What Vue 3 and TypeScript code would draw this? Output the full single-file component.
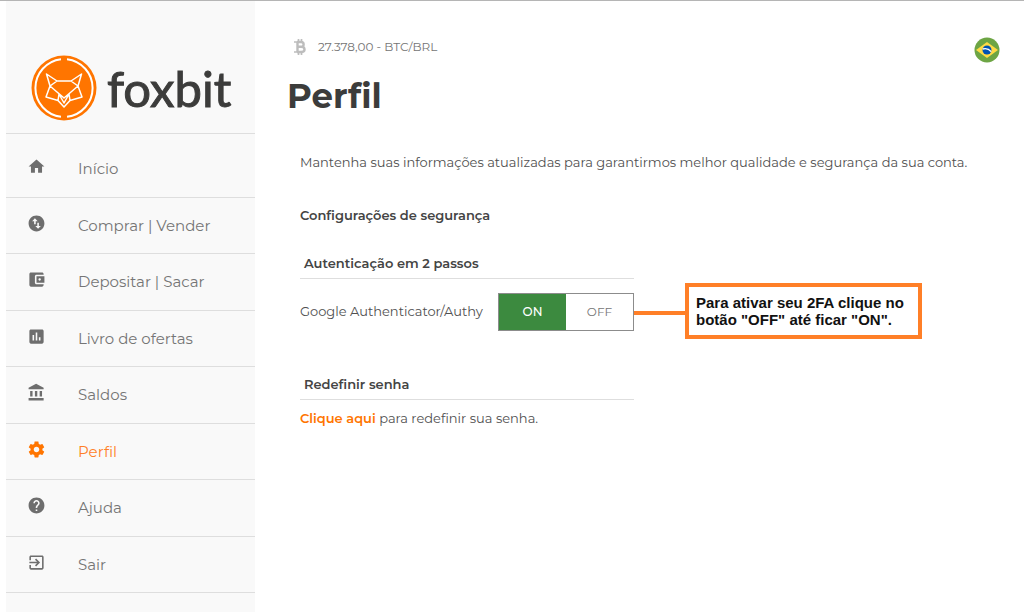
<script setup lang="ts">
import { ref } from 'vue'

interface MenuItem {
  label: string
  icon: string
  active?: boolean
}

const menu: MenuItem[] = [
  { label: 'Início', icon: 'M10 20v-6h4v6h5v-8h3L12 3 2 12h3v8z' },
  {
    label: 'Comprar | Vender',
    icon: 'M12 2C6.48 2 2 6.48 2 12s4.48 10 10 10 10-4.48 10-10S17.52 2 12 2zM6.5 9L10 5.5 13.5 9H11v4H9V9H6.5zm11 6L14 18.5 10.5 15H13v-4h2v4h2.5z',
  },
  {
    label: 'Depositar | Sacar',
    icon: 'M21 18v1c0 1.1-.9 2-2 2H5c-1.11 0-2-.9-2-2V5c0-1.1.89-2 2-2h14c1.1 0 2 .9 2 2v1h-9c-1.11 0-2 .9-2 2v8c0 1.1.89 2 2 2h9zm-9-2h10V8H12v8zm4-2.5c-.83 0-1.5-.67-1.5-1.5s.67-1.5 1.5-1.5 1.5.67 1.5 1.5-.67 1.5-1.5 1.5z',
  },
  {
    label: 'Livro de ofertas',
    icon: 'M19 3H5c-1.1 0-2 .9-2 2v14c0 1.1.9 2 2 2h14c1.1 0 2-.9 2-2V5c0-1.1-.9-2-2-2zM9 17H7v-7h2v7zm4 0h-2V7h2v10zm4 0h-2v-4h2v4z',
  },
  {
    label: 'Saldos',
    icon: 'M4 10v7h3v-7H4zm6 0v7h3v-7h-3zM2 22h19v-3H2v3zm14-12v7h3v-7h-3zm-4.5-9L2 6v2h19V6l-9.500-5z',
  },
  {
    label: 'Perfil',
    active: true,
    icon: 'M19.43 12.98c.04-.32.07-.64.07-.98s-.03-.66-.07-.98l2.110-1.650c.19-.15.24-.42.12-.64l-2-3.460c-.12-.22-.39-.3-.61-.22l-2.490 1c-.52-.4-1.080-.73-1.690-.98l-.38-2.650C14.460 2.180 14.250 2 14 2h-4c-.25 0-.46.18-.49.42l-.38 2.650c-.61.25-1.170.59-1.690.98l-2.490-1c-.23-.09-.49 0-.61.22l-2 3.460c-.13.22-.07.49.12.64l2.110 1.650c-.04.32-.07.65-.07.98s.03.66.07.98l-2.110 1.650c-.19.15-.24.42-.12.64l2 3.460c.12.22.39.3.61.22l2.490-1c.52.4 1.080.73 1.690.98l.38 2.650c.03.24.24.42.49.42h4c.25 0 .46-.18.49-.42l.38-2.650c.61-.25 1.170-.59 1.690-.98l2.490 1c.23.09.49 0 .61-.22l2-3.460c.12-.22.07-.49-.12-.64l-2.110-1.650zM12 15.500c-1.930 0-3.500-1.570-3.500-3.500s1.570-3.500 3.500-3.500 3.500 1.570 3.500 3.500-1.570 3.500-3.500 3.500z',
  },
  {
    label: 'Ajuda',
    icon: 'M12 2C6.48 2 2 6.48 2 12s4.48 10 10 10 10-4.480 10-10S17.520 2 12 2zm1 17h-2v-2h2v2zm2.070-7.750l-.9.920C13.450 12.900 13 13.500 13 15h-2v-.5c0-1.100.45-2.100 1.170-2.830l1.240-1.260c.37-.36.59-.86.59-1.410 0-1.100-.9-2-2-2s-2 .9-2 2H8c0-2.210 1.790-4 4-4s4 1.790 4 4c0 .88-.36 1.680-.93 2.250z',
  },
  {
    label: 'Sair',
    icon: 'M10.090 15.590L11.500 17l5-5-5-5-1.410 1.410L12.670 11H3v2h9.670l-2.580 2.590zM19 3H5c-1.110 0-2 .9-2 2v4h2V5h14v14H5v-4H3v4c0 1.100.89 2 2 2h14c1.100 0 2-.9 2-2V5c0-1.100-.9-2-2-2z',
  },
]

const twoFactor = ref(true)
</script>

<template>
  <div class="page">
    <aside class="sidebar">
      <a class="brand" href="#" aria-label="foxbit">
        <svg class="brand-mark" viewBox="0 0 66 66" aria-hidden="true">
          <circle cx="33" cy="33" r="32.500" fill="#ff7500" />
          <g fill="none" stroke="#fff" stroke-linejoin="round">
            <path d="M30 4.200A29 29 0 0 0 30 61.800M36 4.200A29 29 0 0 1 36 61.800" stroke-width="2" />
            <path
              d="M15.500 19L26 26H40L50.500 19L47 31L51 42L39 45.500L33 52L27 45.500L15 42L19 31ZM15.500 19L19 31L26 26M50.500 19L47 31L40 26M19 31L33 43L47 31M28 39L27 45.500M38 39L39 45.500M28 39L33 48L38 39"
              stroke-width="1.500"
            />
          </g>
        </svg>
        <span class="brand-name">foxbit</span>
      </a>
      <nav class="menu">
        <a
          v-for="item in menu"
          :key="item.label"
          href="#"
          class="menu-item"
          :class="{ active: item.active }"
          :aria-current="item.active ? 'page' : undefined"
        >
          <svg class="menu-icon" viewBox="0 0 24 24" aria-hidden="true"><path :d="item.icon" /></svg>
          <span>{{ item.label }}</span>
        </a>
      </nav>
    </aside>

    <main class="content">
      <header class="topbar">
        <div class="ticker">
          <svg class="btc" viewBox="0 0 12 16" aria-hidden="true">
            <g fill="none" stroke="#bdbdbd">
              <path d="M0 3H7M0 13H7M4.500 0V3M7.500 0V3M4.500 13V16M7.500 13V16" stroke-width="1.700" />
              <path d="M3.500 3V13M3 3H7C10.500 3 10.500 7.800 7 7.800H3.500M7 7.800C11.700 7.800 11.700 13 7 13H3" stroke-width="2.400" />
            </g>
          </svg>
          <span>27.378,00 - BTC/BRL</span>
        </div>
        <button class="language" type="button" aria-label="Português (Brasil)">
          <svg viewBox="0 0 26 26" aria-hidden="true">
            <circle cx="13" cy="13" r="12.500" fill="#6da544" />
            <path d="M13 5L24 13L13 21L2 13Z" fill="#ffda44" />
            <circle cx="13" cy="13" r="4.500" fill="#0052b4" />
            <path d="M8.700 12C11.500 11.200 15 12 17.200 14.600" fill="none" stroke="#fff" stroke-width="1.400" />
          </svg>
        </button>
      </header>

      <h1>Perfil</h1>

      <div class="body">
        <p class="intro">Mantenha suas informações atualizadas para garantirmos melhor qualidade e segurança da sua conta.</p>
        <h2>Configurações de segurança</h2>

        <section class="panel">
          <h3>Autenticação em 2 passos</h3>
          <div class="setting">
            <span id="auth-label">Google Authenticator/Authy</span>
            <div class="switch" role="group" aria-labelledby="auth-label">
              <button type="button" :class="{ on: twoFactor }" :aria-pressed="twoFactor" @click="twoFactor = true">ON</button>
              <button type="button" :class="{ on: !twoFactor }" :aria-pressed="!twoFactor" @click="twoFactor = false">OFF</button>
            </div>
            <div class="callout">
              <span class="callout-line"></span>
              <p class="callout-box">Para ativar seu 2FA clique no<br />botão "OFF" até ficar "ON".</p>
            </div>
          </div>
        </section>

        <section class="panel reset">
          <h3>Redefinir senha</h3>
          <p><a href="#">Clique aqui</a> para redefinir sua senha.</p>
        </section>
      </div>
    </main>
  </div>
</template>

<style>
body {
  margin: 0;
  background: #fff;
}
</style>

<style scoped>
.page {
  box-sizing: border-box;
  display: flex;
  min-height: 100vh;
  padding-left: 6px;
  border-top: 1px solid #b5b5b5;
  font-family: Montserrat, Inter, "Liberation Sans", sans-serif;
  font-size: 13px;
  line-height: 20px;
  color: #505050;
}

.page *,
.page *::before {
  box-sizing: border-box;
}

h1,
h2,
h3,
p {
  margin: 0;
}

a {
  text-decoration: none;
}

.sidebar {
  flex: 0 0 249px;
  background: #f9f9f9;
}

.brand {
  display: flex;
  align-items: center;
  gap: 10px;
  padding: 54px 0 12px 25px;
  border-bottom: 1px solid #dedede;
}

.brand-mark {
  width: 66px;
  height: 66px;
}

.brand-name {
  font-family: Lato, sans-serif;
  font-size: 49px;
  line-height: 66px;
  color: #3c3c3b;
  -webkit-text-stroke: 1px #3c3c3b;
}

.menu {
  display: flex;
  flex-direction: column;
  padding-top: 7px;
}

.menu-item {
  display: flex;
  gap: 32px;
  height: 57px;
  padding: 16px 0 0 21px;
  border-bottom: 1px solid #dedede;
  font-size: 15px;
  line-height: 24px;
  color: #757575;
}

.menu-item:nth-child(even) {
  height: 56px;
}

.menu-icon {
  width: 19px;
  height: 19px;
  fill: #6e6e6e;
}

.menu-item.active {
  color: #ff7f27;
}

.menu-item.active .menu-icon {
  fill: #ff7500;
}

.content {
  flex: 1;
  min-width: 0;
  padding: 36px 24px 0 32px;
}

.topbar {
  display: flex;
  justify-content: space-between;
}

.ticker {
  display: flex;
  align-items: center;
  gap: 12px;
  height: 20px;
  padding-left: 7px;
  font-size: 12px;
  color: #757575;
}

.btc {
  width: 12px;
  height: 16px;
}

.language {
  width: 26px;
  height: 26px;
  padding: 0;
  border: 0;
  background: none;
}

.language svg {
  display: block;
}

h1 {
  padding-top: 13px;
  font-size: 34px;
  line-height: 40px;
  font-weight: 700;
  color: #3c3c3b;
}

.body {
  padding: 36px 0 0 13px;
}

h2,
h3 {
  font-size: 13px;
  line-height: 20px;
  font-weight: 600;
  color: #444;
}

h2 {
  padding-top: 33px;
}

.panel {
  width: 334px;
  padding-top: 28px;
}

.panel h3 {
  padding: 0 4px 5px;
  border-bottom: 1px solid #dedede;
}

.setting {
  position: relative;
  display: flex;
  justify-content: space-between;
  padding-top: 14px;
  line-height: 36px;
  white-space: nowrap;
}

.switch {
  display: flex;
  width: 136px;
  height: 38px;
  border: 1px solid #8c8c8c;
}

.switch button {
  flex: 1;
  padding: 0;
  border: 0;
  background: #fff;
  font: inherit;
  font-size: 12px;
  line-height: 34px;
  color: #757575;
}

.switch button.on {
  background: #3c8a3f;
  font-weight: 500;
  color: #fff;
}

.callout {
  position: absolute;
  top: 4px;
  left: 100%;
  display: flex;
  align-items: center;
}

.callout-line {
  width: 51px;
  height: 4px;
  margin-top: 4px;
  background: #ff7f27;
}

.callout-box {
  width: 237px;
  padding: 7px;
  border: 4px solid #ff7f27;
  background: #fff;
  font-family: "Liberation Sans", Arial, sans-serif;
  font-size: 15px;
  line-height: 17px;
  font-weight: 700;
  color: #111;
}

.reset {
  padding-top: 43px;
}

.reset p {
  padding-top: 8px;
}

.reset a {
  font-weight: 600;
  color: #ff7500;
}
</style>
